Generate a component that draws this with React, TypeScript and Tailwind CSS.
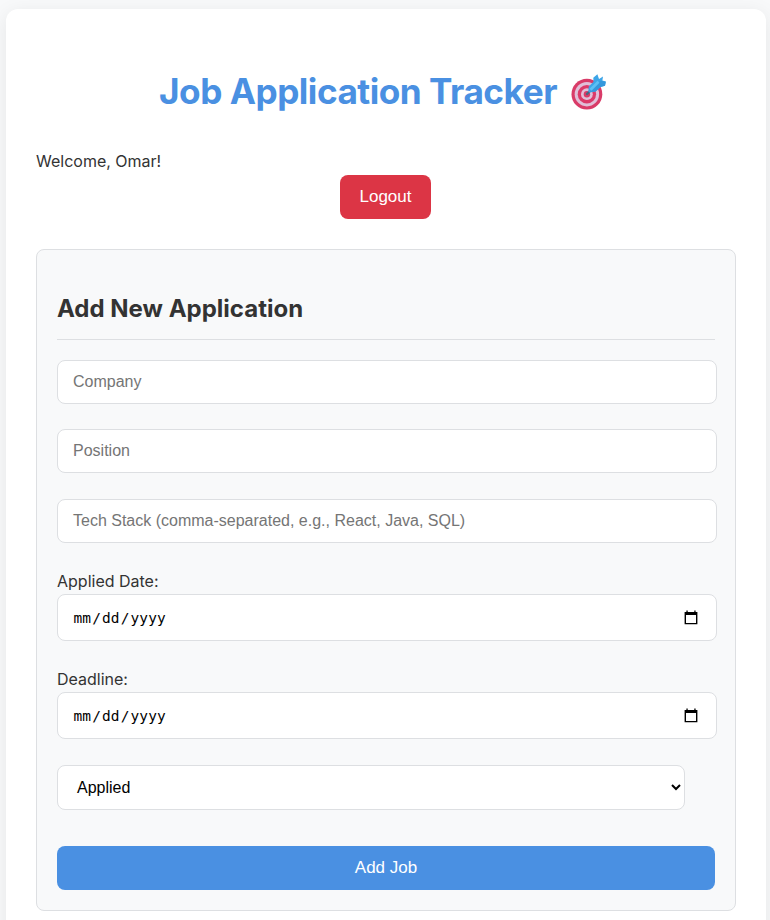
import React from "react";

const arial = "font-['Liberation_Sans',Arial,sans-serif]";

function Target() {
  return (
    <svg width="37" height="37" viewBox="0 0 37 37" className="ml-[13px] shrink-0">
      <circle cx="16.9" cy="21.2" r="15.4" fill="#d93b68" />
      <circle cx="16.9" cy="21.2" r="12.2" fill="#e0bfd8" />
      <circle cx="16.9" cy="21.2" r="9.2" fill="#dc3a69" />
      <circle cx="16.9" cy="21.2" r="5.9" fill="#e0bfd8" />
      <circle cx="16.9" cy="21.2" r="3.2" fill="#d93b68" />
      <path d="M17 21L22 16" stroke="#4c6480" strokeWidth="2.4" strokeLinecap="round" />
      <path d="M18.3 18.5L18.8 13.4L23.5 8.8L23.3 4.8L27.4 1.2L29 6L33 3.6L32.4 7.6L35.8 8.4L35 12.8L30.5 14L25.5 18.6L19.4 19.4Z" fill="#3da5e8" />
      <path d="M19.5 19L30.2 7.8L35.8 8.8L35 12.8L30.5 14L25.5 18.6Z" fill="#3598dc" />
      <path d="M20.5 16.8L28.5 8.8" stroke="#5cc0f5" strokeWidth="2.8" />
    </svg>
  );
}

function Field({ text, className }: { text: string; className: string }) {
  return (
    <div className={`flex h-11 w-[660px] items-center rounded-lg border border-[#dddfe2] bg-white px-[15px] pb-px text-base text-[#757575] ${arial} ${className}`}>
      {text}
    </div>
  );
}

function DateField({ label, className }: { label: string; className: string }) {
  return (
    <div className={className}>
      <div className="h-[25px] text-base leading-[25px]">{label}</div>
      <div className="flex h-[47px] w-[660px] items-center justify-between rounded-lg border border-[#dddfe2] bg-white pl-[15.5px] pr-[18px] font-['DejaVu_Sans_Mono',monospace] text-[14.5px] tracking-[0.1px] text-black">
        <span className="pt-0.5">
          mm<span className="mx-px">/</span>dd<span className="mx-px">/</span>yyyy
        </span>
        <svg width="14" height="15" viewBox="0 0 14 15">
          <path d="M2.4 .6h1.3V2h6.6V.6h1.3V2h1.8v12.3H.6V2h1.8zM2 5v8h10V5z" fill="#000" fillRule="evenodd" />
        </svg>
      </div>
    </div>
  );
}

export default function App() {
  return (
    <div className="h-[920px] overflow-hidden bg-[#f8f9fa] pl-[6px] pr-1 pt-[9px] font-['Inter',sans-serif] text-[#333]">
      <main className="h-[950px] rounded-xl bg-white px-[30px] pt-[55px] shadow-[0_4px_20px_rgba(0,0,0,0.08)]">
        <h1 className="flex h-[54px] items-center justify-center pr-[6px] text-[35.2px] font-bold leading-[54px] tracking-[-0.5px] text-[#4a90e2]">
          <span className="whitespace-nowrap">Job Application Tracker</span>
          <Target />
        </h1>
        <p className="mt-[30px] h-[27px] text-base leading-[26px]">Welcome, Omar!</p>
        <button className={`ml-[304px] flex h-11 w-[91px] items-center justify-center rounded-lg bg-[#dc3545] pb-px text-[17px] text-white ${arial}`}>
          Logout
        </button>
        <section className="mt-[30px] h-[662px] w-[700px] rounded-lg border border-[#dddfe2] bg-[#f8f9fa] px-5 pt-[39px]">
          <h2 className="h-[51px] border-b border-[#dddfe2] text-2xl font-bold leading-[39px]">Add New Application</h2>
          <Field text="Company" className="mt-5" />
          <Field text="Position" className="mt-[25px]" />
          <Field text="Tech Stack (comma-separated, e.g., React, Java, SQL)" className="mt-[26px]" />
          <DateField label="Applied Date:" className="mt-[26px]" />
          <DateField label="Deadline:" className="mt-[26px]" />
          <div className={`mt-[26px] flex h-[45px] w-[628px] items-center justify-between rounded-lg border border-[#dddfe2] bg-white pl-[19px] pr-[3px] text-base text-black ${arial}`}>
            <span>Applied</span>
            <svg width="10" height="8" viewBox="0 0 10 8" className="mb-0.5">
              <path d="M1 2l4 4 4-4" fill="none" stroke="#000" strokeWidth="2" />
            </svg>
          </div>
          <button className={`mt-9 flex h-11 w-full items-center justify-center rounded-lg bg-[#4a90e2] pb-px text-[17px] text-white ${arial}`}>
            Add Job
          </button>
        </section>
      </main>
    </div>
  );
}
